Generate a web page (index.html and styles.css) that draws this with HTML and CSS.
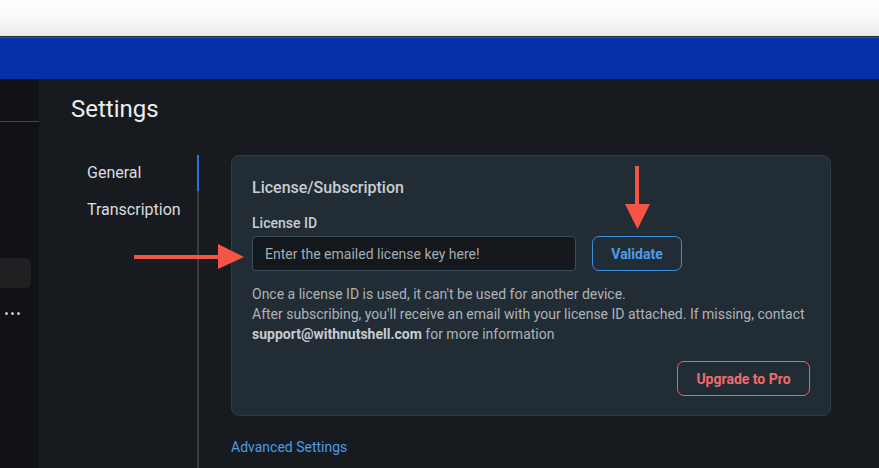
FILE: index.html
```html
<!DOCTYPE html>
<html>
<head>
<meta charset="utf-8">
<link rel="stylesheet" href="styles.css">
</head>
<body>
<div class="chrome"></div>
<div class="appbar"></div>
<div class="app">
  <aside class="sidebar">
    <div class="sidebar-head"></div>
    <div class="sidebar-item"></div>
    <div class="sidebar-dots"><span></span><span></span><span></span></div>
  </aside>
  <main class="main">
    <h1 class="title">Settings</h1>
    <div class="layout">
      <nav class="nav">
        <div class="nav-item active">General</div>
        <div class="nav-item">Transcription</div>
      </nav>
      <section class="content">
        <div class="card">
          <h2 class="card-title">License/Subscription</h2>
          <label class="label">License ID</label>
          <div class="row">
            <input class="input" type="text" placeholder="Enter the emailed license key here!">
            <button class="btn btn-blue">Validate</button>
          </div>
          <p class="info">Once a license ID is used, it can't be used for another device.<br>After subscribing, you'll receive an email with your license ID attached. If missing, contact <b>support@withnutshell.com</b> for more information</p>
          <div class="actions">
            <button class="btn btn-red">Upgrade to Pro</button>
          </div>
        </div>
        <a class="advanced">Advanced Settings</a>
      </section>
    </div>
  </main>
</div>
<svg class="arrow arrow-h" width="112" height="26" viewBox="0 0 112 26"><rect x="0" y="11" width="88" height="4" fill="#f65446"/><polygon points="84,0 110,13 84,25" fill="#f65446"/></svg>
<svg class="arrow arrow-v" width="26" height="64" viewBox="0 0 26 64"><rect x="10" y="0" width="4" height="40" fill="#f65446"/><polygon points="0,38 25,38 12.5,63" fill="#f65446"/></svg>
</body>
</html>
```
FILE: styles.css
```css
* { box-sizing: border-box; }
html, body { margin: 0; padding: 0; }
body {
  width: 879px;
  height: 468px;
  overflow: hidden;
  font-family: Roboto, "Noto Sans", sans-serif;
  background: #171b1f;
  position: relative;
}
.chrome {
  height: 37px;
  background: linear-gradient(#ffffff 0%, #fbfbfb 45%, #e8e8e8 100%);
  border-bottom: 1px solid #2a2a2a;
}
.appbar {
  height: 42px;
  background: #0630a8;
  border-top: 1px solid #2a4cb8;
}
.app {
  display: flex;
  height: 389px;
  overflow: hidden;
}
.sidebar {
  width: 39px;
  background: #111215;
  flex: none;
}
.sidebar-head {
  height: 43px;
  border-bottom: 1px solid #45474a;
}
.sidebar-item {
  margin-top: 136px;
  width: 31px;
  height: 30px;
  background: #1f2022;
  border-radius: 0 6px 6px 0;
}
.sidebar-dots {
  display: flex;
  gap: 3px;
  margin: 24px 0 0 5px;
}
.sidebar-dots span {
  width: 3px;
  height: 3px;
  border-radius: 50%;
  background: #c4c4c4;
}
.main {
  flex: 1;
  padding: 16px 0 0 32px;
  background: #171b1f;
}
.title {
  margin: 0;
  font-size: 24px;
  line-height: 28px;
  font-weight: 400;
  color: #eceded;
}
.layout {
  display: flex;
  margin-top: 32px;
  height: 313px;
}
.nav {
  width: 128px;
  border-right: 2px solid #3b3d40;
  padding-left: 16px;
  flex: none;
}
.nav-item {
  height: 37px;
  line-height: 35px;
  font-size: 16px;
  color: #dcdddf;
  position: relative;
}
.nav-item.active::after {
  content: "";
  position: absolute;
  right: -2px;
  top: 0;
  width: 2px;
  height: 36px;
  background: #2b72d6;
}
.content {
  margin-left: 32px;
}
.card {
  width: 600px;
  height: 261px;
  background: #222c35;
  border: 1px solid #2f3b46;
  border-radius: 8px;
  padding: 22px 20px 0 20px;
}
.card-title {
  margin: 0;
  font-size: 16px;
  line-height: 20px;
  font-weight: 500;
  color: #c9cdd1;
}
.label {
  display: block;
  margin-top: 15px;
  font-size: 14px;
  line-height: 20px;
  font-weight: 500;
  color: #c9cdd1;
}
.row {
  display: flex;
  gap: 16px;
  margin-top: 3px;
}
.input {
  width: 324px;
  height: 35px;
  background: #14181c;
  border: 1px solid #3d4c5b;
  border-radius: 4px;
  padding: 0 12px;
  font-family: inherit;
  font-size: 14px;
  color: #ccc;
  outline: none;
}
.input::placeholder { color: #a3abb3; }
.btn {
  height: 35px;
  border-radius: 7px;
  background: transparent;
  font-family: inherit;
  font-size: 14px;
  font-weight: 700;
  padding: 0;
}
.btn-blue {
  width: 90px;
  border: 1px solid #3d8fe3;
  color: #4a9ce8;
}
.info {
  margin: 13px 0 0;
  font-size: 14px;
  line-height: 20px;
  color: #aeb3b8;
}
.info b { color: #c8ccd0; font-weight: 700; }
.actions {
  display: flex;
  justify-content: flex-end;
  margin-top: 17px;
}
.btn-red {
  width: 133px;
  border: 1px solid #e06a6a;
  color: #f06c6c;
}
.advanced {
  display: block;
  margin-top: 21px;
  font-size: 14px;
  line-height: 20px;
  color: #4a9ce8;
}
.arrow { position: absolute; }
.arrow-h { left: 134px; top: 244px; }
.arrow-v { left: 625px; top: 166px; }
```
